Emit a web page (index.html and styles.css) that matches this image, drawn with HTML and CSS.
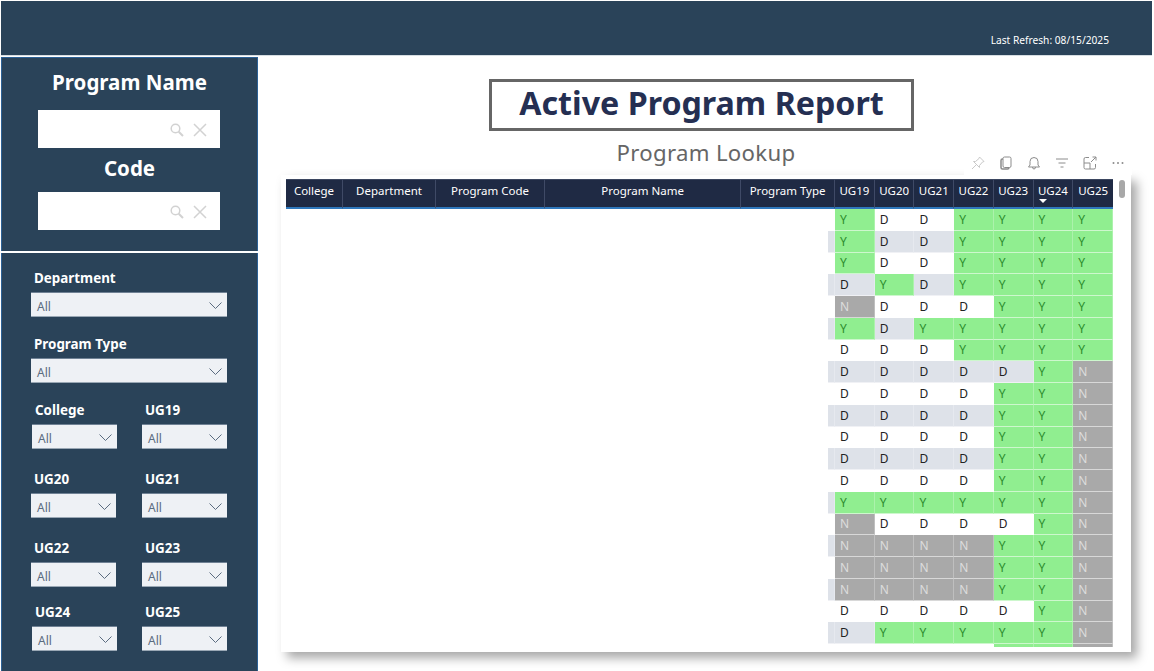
FILE: index.html
```html
<!DOCTYPE html>
<html lang="en">
<head>
    <meta charset="UTF-8">
    <meta name="viewport" content="width=device-width, initial-scale=1.0">
    <title>Active Program Report</title>
    <link rel="stylesheet" href="styles.css">
</head>

<body>
    <header class="topbar">
        <span class="refresh">Last Refresh: 08/15/2025</span>
    </header>

    <div class="page">
        <aside class="sidebar">
            <section class="panel search-panel">
                <h2>Program Name</h2>
                <div class="searchbox">
                    <svg width="16" height="16" viewBox="0 0 16 16"><circle cx="6.5" cy="6.5" r="4.3"/><path d="M9.7 9.7 14 14" stroke-width="2"/></svg>
                    <svg width="14" height="14" viewBox="0 0 14 14"><path d="M1 1 13 13M13 1 1 13"/></svg>
                </div>
                <h2 class="code-title">Code</h2>
                <div class="searchbox">
                    <svg width="16" height="16" viewBox="0 0 16 16"><circle cx="6.5" cy="6.5" r="4.3"/><path d="M9.7 9.7 14 14" stroke-width="2"/></svg>
                    <svg width="14" height="14" viewBox="0 0 14 14"><path d="M1 1 13 13M13 1 1 13"/></svg>
                </div>
            </section>

            <section class="panel filter-panel">
                <div class="filter wide">
                    <label>Department</label>
                    <div class="dropdown">All <svg width="13" height="7" viewBox="0 0 13 7"><path d="M.5.5 6.5 6.5 12.5.5"/></svg></div>
                </div>
                <div class="filter wide">
                    <label>Program Type</label>
                    <div class="dropdown">All <svg width="13" height="7" viewBox="0 0 13 7"><path d="M.5.5 6.5 6.5 12.5.5"/></svg></div>
                </div>
                <div class="filter-row row-college">
                    <div class="filter shifted">
                        <label>College</label>
                        <div class="dropdown">All <svg width="13" height="7" viewBox="0 0 13 7"><path d="M.5.5 6.5 6.5 12.5.5"/></svg></div>
                    </div>
                    <div class="filter">
                        <label>UG19</label>
                        <div class="dropdown">All <svg width="13" height="7" viewBox="0 0 13 7"><path d="M.5.5 6.5 6.5 12.5.5"/></svg></div>
                    </div>
                </div>
                <div class="filter-row row-20">
                    <div class="filter">
                        <label>UG20</label>
                        <div class="dropdown">All <svg width="13" height="7" viewBox="0 0 13 7"><path d="M.5.5 6.5 6.5 12.5.5"/></svg></div>
                    </div>
                    <div class="filter">
                        <label>UG21</label>
                        <div class="dropdown">All <svg width="13" height="7" viewBox="0 0 13 7"><path d="M.5.5 6.5 6.5 12.5.5"/></svg></div>
                    </div>
                </div>
                <div class="filter-row row-22">
                    <div class="filter">
                        <label>UG22</label>
                        <div class="dropdown">All <svg width="13" height="7" viewBox="0 0 13 7"><path d="M.5.5 6.5 6.5 12.5.5"/></svg></div>
                    </div>
                    <div class="filter">
                        <label>UG23</label>
                        <div class="dropdown">All <svg width="13" height="7" viewBox="0 0 13 7"><path d="M.5.5 6.5 6.5 12.5.5"/></svg></div>
                    </div>
                </div>
                <div class="filter-row row-24">
                    <div class="filter shifted">
                        <label>UG24</label>
                        <div class="dropdown">All <svg width="13" height="7" viewBox="0 0 13 7"><path d="M.5.5 6.5 6.5 12.5.5"/></svg></div>
                    </div>
                    <div class="filter">
                        <label>UG25</label>
                        <div class="dropdown">All <svg width="13" height="7" viewBox="0 0 13 7"><path d="M.5.5 6.5 6.5 12.5.5"/></svg></div>
                    </div>
                </div>
            </section>
        </aside>

        <main class="report">
            <h1 class="report-title">Active Program Report</h1>
            <p class="report-sub">Program Lookup</p>

            <div class="visual">
                <div class="toolbar">
                    <svg class="pin" width="14" height="14" viewBox="0 0 14 14"><path d="M8.5 1 13 5.5 11.5 6 8.5 9.5 8.5 11.5 2.5 5.5 4.5 5.5 8 2.5ZM5 9 1 13"/></svg>
                    <svg width="14" height="14" viewBox="0 0 14 14"><rect x="4" y="1" width="8" height="10.5" rx="1.5"/><path d="M4 3H3.5Q2 3 2 4.5V11.500Q2 13 3.500 13H8.500Q10 13 10 11.500" stroke-width="1.5"/></svg>
                    <svg width="14" height="14" viewBox="0 0 14 14"><path d="M1.5 11H12.5L11 9V5.5A4 4 0 0 0 3 5.5V9ZM5.5 11Q5.5 13 7 13T8.5 11"/></svg>
                    <svg width="14" height="14" viewBox="0 0 14 14"><path d="M1 3H13M3.5 7H10.500M5.500 11H8.500"/></svg>
                    <svg width="14" height="14" viewBox="0 0 14 14"><path d="M6 1.500H2.500Q1 1.500 1 3V11.500Q1 13 2.500 13H11Q12.500 13 12.500 11.500V8M1 7H7V13M8 6 13 1M9.500 1H13V4.500"/></svg>
                    <svg width="14" height="14" viewBox="0 0 14 14"><circle class="dot" cx="2.500" cy="7" r="1"/><circle class="dot" cx="7" cy="7" r="1"/><circle class="dot" cx="11.500" cy="7" r="1"/></svg>
                </div>
                <div class="scrollthumb"></div>

                <div class="table-clip">
                    <table class="matrix">
                        <colgroup>
                            <col class="c-college"><col class="c-dept"><col class="c-code"><col class="c-name"><col class="c-type"><col class="c-stub">
                            <col class="c-ug"><col class="c-ug"><col class="c-ug"><col class="c-ug"><col class="c-ug"><col class="c-ug"><col class="c-ug">
                        </colgroup>
                        <thead>
                            <tr>
                                <th>College</th><th>Department</th><th>Program Code</th><th>Program Name</th><th colspan="2">Program Type</th>
                                <th>UG19</th><th>UG20</th><th>UG21</th><th>UG22</th><th>UG23</th><th class="sorted">UG24</th><th>UG25</th>
                            </tr>
                        </thead>
                        <tbody>
                            <tr><td colspan="5"></td><td></td><td class="y">Y</td><td>D</td><td>D</td><td class="y">Y</td><td class="y">Y</td><td class="y">Y</td><td class="y">Y</td></tr>
                            <tr><td colspan="5"></td><td></td><td class="y">Y</td><td>D</td><td>D</td><td class="y">Y</td><td class="y">Y</td><td class="y">Y</td><td class="y">Y</td></tr>
                            <tr><td colspan="5"></td><td></td><td class="y">Y</td><td>D</td><td>D</td><td class="y">Y</td><td class="y">Y</td><td class="y">Y</td><td class="y">Y</td></tr>
                            <tr><td colspan="5"></td><td></td><td>D</td><td class="y">Y</td><td>D</td><td class="y">Y</td><td class="y">Y</td><td class="y">Y</td><td class="y">Y</td></tr>
                            <tr><td colspan="5"></td><td></td><td class="n">N</td><td>D</td><td>D</td><td>D</td><td class="y">Y</td><td class="y">Y</td><td class="y">Y</td></tr>
                            <tr><td colspan="5"></td><td></td><td class="y">Y</td><td>D</td><td class="y">Y</td><td class="y">Y</td><td class="y">Y</td><td class="y">Y</td><td class="y">Y</td></tr>
                            <tr><td colspan="5"></td><td></td><td>D</td><td>D</td><td>D</td><td class="y">Y</td><td class="y">Y</td><td class="y">Y</td><td class="y">Y</td></tr>
                            <tr><td colspan="5"></td><td></td><td>D</td><td>D</td><td>D</td><td>D</td><td>D</td><td class="y">Y</td><td class="n">N</td></tr>
                            <tr><td colspan="5"></td><td></td><td>D</td><td>D</td><td>D</td><td>D</td><td class="y">Y</td><td class="y">Y</td><td class="n">N</td></tr>
                            <tr><td colspan="5"></td><td></td><td>D</td><td>D</td><td>D</td><td>D</td><td class="y">Y</td><td class="y">Y</td><td class="n">N</td></tr>
                            <tr><td colspan="5"></td><td></td><td>D</td><td>D</td><td>D</td><td>D</td><td class="y">Y</td><td class="y">Y</td><td class="n">N</td></tr>
                            <tr><td colspan="5"></td><td></td><td>D</td><td>D</td><td>D</td><td>D</td><td class="y">Y</td><td class="y">Y</td><td class="n">N</td></tr>
                            <tr><td colspan="5"></td><td></td><td>D</td><td>D</td><td>D</td><td>D</td><td class="y">Y</td><td class="y">Y</td><td class="n">N</td></tr>
                            <tr><td colspan="5"></td><td></td><td class="y">Y</td><td class="y">Y</td><td class="y">Y</td><td class="y">Y</td><td class="y">Y</td><td class="y">Y</td><td class="n">N</td></tr>
                            <tr><td colspan="5"></td><td></td><td class="n">N</td><td>D</td><td>D</td><td>D</td><td>D</td><td class="y">Y</td><td class="n">N</td></tr>
                            <tr><td colspan="5"></td><td></td><td class="n">N</td><td class="n">N</td><td class="n">N</td><td class="n">N</td><td class="y">Y</td><td class="y">Y</td><td class="n">N</td></tr>
                            <tr><td colspan="5"></td><td></td><td class="n">N</td><td class="n">N</td><td class="n">N</td><td class="n">N</td><td class="y">Y</td><td class="y">Y</td><td class="n">N</td></tr>
                            <tr><td colspan="5"></td><td></td><td class="n">N</td><td class="n">N</td><td class="n">N</td><td class="n">N</td><td class="y">Y</td><td class="y">Y</td><td class="n">N</td></tr>
                            <tr><td colspan="5"></td><td></td><td>D</td><td>D</td><td>D</td><td>D</td><td>D</td><td class="y">Y</td><td class="n">N</td></tr>
                            <tr><td colspan="5"></td><td></td><td>D</td><td class="y">Y</td><td class="y">Y</td><td class="y">Y</td><td class="y">Y</td><td class="y">Y</td><td class="n">N</td></tr>
                            <tr class="cut"><td colspan="5"></td><td></td><td></td><td></td><td></td><td></td><td class="y"></td><td class="y"></td><td class="n"></td></tr>
                        </tbody>
                    </table>
                </div>
            </div>
        </main>
    </div>
</body>
</html>
```

FILE: styles.css
```css
* {
    box-sizing: border-box;
}

html, body {
    height: 100%;
}

body {
    margin: 0;
    background: white;
    font-family: "Noto Sans", "Open Sans", Arial, sans-serif;
    overflow: hidden;
}

.topbar {
    height: 55px;
    margin: 1px 2px 0 1px;
    padding: 0 43px 8px 0;
    background: #2a4359;
    color: white;
    font-size: 10.2px;
    display: flex;
    justify-content: flex-end;
    align-items: flex-end;
    border-bottom: 1px solid #d6dde2;
}

.page {
    display: flex;
}

/* left column */
.sidebar {
    width: 257px;
    margin: 1px 0 0 1px;
    flex: none;
}

.panel {
    background: #2a4359;
    border-left: 1px solid #2c6196;
    border-right: 1px solid #2c6196;
}

.search-panel {
    height: 194px;
    padding-top: 10px;
    border-top: 1px solid #2c6196;
    text-align: center;
}

.search-panel h2 {
    margin: 0;
    color: white;
    font-size: 20.5px;
    line-height: 28px;
    font-weight: 700;
}

.search-panel .code-title {
    margin-top: 6px;
}

.searchbox {
    width: 182px;
    height: 38px;
    margin: 14px 0 0 36px;
    padding: 2px 13px 0 0;
    background: white;
    display: flex;
    justify-content: flex-end;
    align-items: center;
    gap: 8px;
}

.search-panel .code-title + .searchbox {
    margin-top: 10px;
}

.searchbox svg {
    fill: none;
    stroke: #d2d2d2;
    stroke-width: 1.5;
}

.filter-panel {
    height: 418px;
    margin-top: 2px;
    padding: 16px 30px 0 29px;
}

.filter {
    width: 85px;
}

.filter.wide {
    width: 196px;
    margin-bottom: 18px;
}

.filter label {
    display: block;
    height: 18px;
    margin-bottom: 5px;
    padding-left: 3px;
    color: white;
    font-size: 13.4px;
    font-weight: 700;
    line-height: 18px;
}

.filter.shifted {
    margin-left: 1px;
}

.filter-row {
    display: flex;
    justify-content: space-between;
}

.row-20, .row-22 {
    margin-top: 21px;
}

.row-24 {
    margin-top: 16px;
}

.dropdown {
    height: 25px;
    padding: 5px 6px 0;
    background: #eef1f5;
    border-top: 1px solid #6f8194;
    border-bottom: 1px solid #9aa8b5;
    color: #5b6c80;
    font-size: 12px;
    line-height: 20px;
    display: flex;
    justify-content: space-between;
    align-items: center;
}

.dropdown svg {
    fill: none;
    stroke: #5b6c80;
    margin: 0 -1px 4px 0;
}

/* report area */
.report {
    flex: 1;
    position: relative;
    padding-top: 23px;
}

.report-title {
    width: 425px;
    height: 52px;
    margin: 0 0 0 231px;
    border: 3px solid #666;
    color: #252f52;
    font-size: 32.2px;
    font-weight: 700;
    line-height: 42px;
    text-align: center;
}

.report-sub {
    width: 300px;
    margin: 6px 0 0 298px;
    color: #666;
    font-size: 22.2px;
    line-height: 32px;
    letter-spacing: 0.3px;
    text-align: center;
}

.visual {
    position: relative;
    width: 850px;
    height: 477px;
    margin: 6px 0 0 23px;
    padding: 4px 17px 0 5px;
    background: white;
    box-shadow: 6px 6px 10px rgba(0, 0, 0, 0.35);
}

.toolbar {
    position: absolute;
    top: -23px;
    right: -1px;
    height: 23px;
    padding: 0 7px 2px 7px;
    background: white;
    display: flex;
    align-items: center;
    gap: 14px;
}

.toolbar svg {
    fill: none;
    stroke: #8c8c8c;
    stroke-width: 1;
}

.toolbar .pin {
    stroke: #c9c9c9;
}

.toolbar .dot {
    fill: #8c8c8c;
    stroke: none;
}

.scrollthumb {
    position: absolute;
    top: 5px;
    right: 6px;
    width: 6px;
    height: 18px;
    border-radius: 3px;
    background: #a8a8a8;
}

.table-clip {
    height: 468px;
    overflow: hidden;
}

.matrix {
    width: 827px;
    border-collapse: separate;
    border-spacing: 0;
    table-layout: fixed;
    font-size: 11.5px;
}

.c-college { width: 57px; }
.c-dept { width: 93px; }
.c-code { width: 109px; }
.c-name { width: 196px; }
.c-type { width: 87px; }
.c-stub { width: 7px; }
.c-ug { width: 39.7px; }

.matrix th {
    height: 30px;
    padding: 0 0 7px;
    background: #1f2a44;
    border-top: 1px solid #3b4660;
    border-right: 1px solid #3f4a66;
    border-bottom: 2px solid #2f78bd;
    color: white;
    font-weight: 400;
    text-align: center;
    position: relative;
}

.matrix th:last-child {
    border-right: none;
}

.sorted::after {
    content: "";
    position: absolute;
    left: 5px;
    bottom: 4px;
    border-left: 4px solid transparent;
    border-right: 4px solid transparent;
    border-top: 4px solid white;
}

.matrix td {
    height: 21.75px;
    padding: 1px 0 0 5px;
    border-right: 1px solid rgba(255, 255, 255, 0.25);
    border-bottom: 1px solid rgba(255, 255, 255, 0.55);
    color: #222;
    font-size: 12px;
    line-height: 14px;
}

.matrix td[colspan], .matrix tr:nth-child(even) td[colspan] {
    background: white;
    border: none;
}

.matrix tr:nth-child(even) td {
    background: #dee2e9;
}

.matrix tr td.y {
    background: #90ee90;
    color: #2c8c2c;
}

.matrix tr td.n {
    background: #a9a9a9;
    color: #dcdcdc;
}

.matrix tr.cut td:not(.y):not(.n) {
    background: white;
}
```
